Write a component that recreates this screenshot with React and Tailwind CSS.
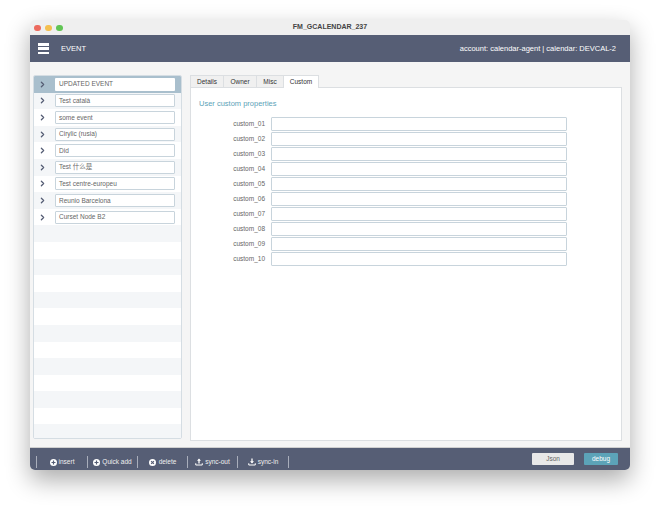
import { ChevronRight } from 'lucide-react';

const events = [
  'UPDATED EVENT',
  'Test català',
  'some event',
  'Cirylic (rusia)',
  'Did',
  'Test 什么是',
  'Test centre-europeu',
  'Reunio Barcelona',
  'Curset Node B2',
];

const customs = ['custom_01', 'custom_02', 'custom_03', 'custom_04', 'custom_05', 'custom_06', 'custom_07', 'custom_08', 'custom_09', 'custom_10'];

const tabs = [
  { name: 'Details', width: 'w-[33px]' },
  { name: 'Owner', width: 'w-[33px]' },
  { name: 'Misc', width: 'w-[27px]' },
  { name: 'Custom', width: 'w-[36px]' },
];

function PlusIcon() {
  return (
    <svg width="7" height="7" viewBox="0 0 14 14">
      <circle cx="7" cy="7" r="7" fill="#fff" />
      <path d="M7 3v8M3 7h8" stroke="#565e75" strokeWidth="2.4" />
    </svg>
  );
}

function DeleteIcon() {
  return (
    <svg width="7" height="7" viewBox="0 0 14 14">
      <circle cx="7" cy="7" r="7" fill="#fff" />
      <path d="M4.2 4.2l5.6 5.6M9.8 4.2l-5.6 5.6" stroke="#565e75" strokeWidth="2.2" />
    </svg>
  );
}

function TrayIcon({ down }) {
  return (
    <svg width="8" height="8" viewBox="0 0 16 16" fill="none" stroke="#fff">
      <path d="M1.5 10.5v3.5h13v-3.5" strokeWidth="2" />
      <path d={down ? 'M8 1v8' : 'M8 3v8'} strokeWidth="2.6" />
      <path d={down ? 'M4 6.5h8L8 11z' : 'M4 5.5h8L8 1z'} fill="#fff" stroke="none" />
    </svg>
  );
}

function ToolButton({ icon, label, width, gap = 'gap-[2px]' }) {
  return (
    <div className={`flex h-[12px] items-center justify-center border-r border-[#a9aebb] ${width} ${gap}`}>
      {icon}
      <span>{label}</span>
    </div>
  );
}

export default function App() {
  const rows = [...Array(22)];

  return (
    <div className="h-[510px] w-[660px] overflow-hidden bg-white pt-[20px] pl-[30px] font-['Liberation_Sans','Noto_Sans_CJK_SC',sans-serif]">
      <div className="flex h-[450px] w-[600px] flex-col overflow-hidden rounded-[5px] bg-[#f5f5f5] shadow-[0_10px_24px_rgba(0,0,0,0.33)]">

        {/* Title bar */}
        <div className="relative flex h-[15px] shrink-0 items-center justify-center bg-[#efefef]">
          <div className="absolute top-[4.5px] left-[4px] flex gap-[4.5px]">
            <span className="h-[6.5px] w-[6.5px] rounded-full bg-[#ec6a5e]" />
            <span className="h-[6.5px] w-[6.5px] rounded-full bg-[#f4bf4f]" />
            <span className="h-[6.5px] w-[6.5px] rounded-full bg-[#61c554]" />
          </div>
          <span className="text-[7px] font-bold text-[#444]">FM_GCALENDAR_237</span>
        </div>

        {/* Header */}
        <div className="flex h-[27px] shrink-0 items-center justify-between bg-[#565e75] pr-[14px] pl-[8px] text-[7.5px] text-white">
          <div className="flex items-center gap-[12px]">
            <div className="flex w-[11px] flex-col gap-[1.75px]">
              <span className="h-[2.5px] bg-white" />
              <span className="h-[2.5px] bg-white" />
              <span className="h-[2.5px] bg-white" />
            </div>
            <span>EVENT</span>
          </div>
          <span>account: calendar-agent | calendar: DEVCAL-2</span>
        </div>

        {/* Content */}
        <div className="flex min-h-0 flex-1 gap-[8px] pt-[13px] pr-[8px] pl-[3px]">

          {/* Event list */}
          <div className="mb-[8px] w-[149px] shrink-0 overflow-hidden rounded-[2px] border border-[#d5dde3] bg-white">
            {rows.map((_, i) => (
              <div key={i} className={`flex h-[16.6px] items-center pl-[4px] ${i === 0 ? 'bg-[#a9bfcd]' : i % 2 === 0 ? 'bg-white' : 'bg-[#f4f6f8]'}`}>
                {events[i] && (
                  <>
                    <ChevronRight size={9} strokeWidth={3.5} className="text-[#565e75]" />
                    <div className={`ml-[8px] flex h-[13px] w-[120px] items-center rounded-[1px] bg-white pl-[3px] text-[6.5px] text-[#666] ${i === 0 ? 'pl-[4px]' : 'border border-[#c8d4dc]'}`}>
                      {events[i]}
                    </div>
                  </>
                )}
              </div>
            ))}
          </div>

          {/* Detail panel */}
          <div className="mb-[6px] flex min-w-0 flex-1 flex-col">
            <div className="flex h-[12px] shrink-0">
              {tabs.map((t) => (
                <div key={t.name} className={`flex h-[13px] items-center justify-center border border-[#dcdfe2] text-[6.5px] text-[#333] ${t.width} ${t.name === 'Custom' ? 'z-10 border-b-0 bg-white' : 'border-r-0 bg-[#f0f0f0]'}`}>
                  {t.name}
                </div>
              ))}
            </div>
            <div className="flex-1 border border-[#dcdfe2] bg-white pt-[10px] pl-[8px]">
              <div className="text-[7.5px] text-[#5ca3b8]">User custom properties</div>
              <div className="mt-[8px] flex flex-col gap-px">
                {customs.map((c) => (
                  <div key={c} className="flex h-[14px] items-center">
                    <span className="w-[66px] text-right text-[6.5px] text-[#666]">{c}</span>
                    <div className="ml-[6px] h-[14px] w-[296px] rounded-[1px] border border-[#c8d4dc] bg-white" />
                  </div>
                ))}
              </div>
            </div>
          </div>
        </div>

        {/* Footer */}
        <div className="flex h-[23px] shrink-0 items-center justify-between border-t border-[#d0d0d0] bg-[#565e75] pr-[12px] pl-[6px] text-[6.5px] text-[#f0f0f0]">
          <div className="flex items-center pt-[6px]">
            <span className="h-[12px] border-r border-[#a9aebb]" />
            <ToolButton icon={<PlusIcon />} label="insert" width="w-[51px]" />
            <ToolButton icon={<PlusIcon />} label="Quick add" width="w-[50px]" />
            <ToolButton icon={<DeleteIcon />} label="delete" width="w-[50px]" gap="gap-[3px]" />
            <ToolButton icon={<TrayIcon />} label="sync-out" width="w-[50px]" />
            <ToolButton icon={<TrayIcon down />} label="sync-in" width="w-[51px]" />
          </div>
          <div className="flex items-center gap-[10px]">
            <div className="flex h-[12px] w-[42px] items-center justify-center rounded-[1px] bg-[#e8e8e8] text-[#666]">Json</div>
            <div className="flex h-[12px] w-[34px] items-center justify-center rounded-[1px] bg-[#5ca3b8] text-white">debug</div>
          </div>
        </div>
      </div>
    </div>
  );
}
